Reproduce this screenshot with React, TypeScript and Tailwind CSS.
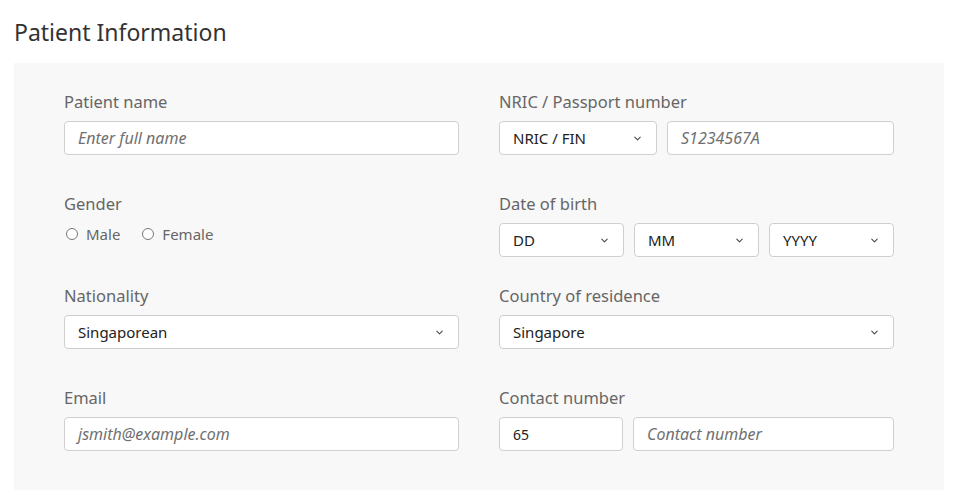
import { ChevronDown } from "lucide-react";

function Select({ value, className }: { value: string; className?: string }) {
  return (
    <div
      className={`flex h-[34px] items-center justify-between rounded-[4px] border border-[#cfcfcf] bg-white pl-[13px] pr-[13px] text-[15px] text-[#222] ${className ?? ""}`}
    >
      <span>{value}</span>
      <ChevronDown className="h-[11px] w-[11px] text-[#444]" strokeWidth={2.2} />
    </div>
  );
}

function TextInput({
  placeholder,
  value,
  className,
}: {
  placeholder?: string;
  value?: string;
  className?: string;
}) {
  return (
    <div
      className={`flex h-[34px] items-center rounded-[4px] border border-[#cfcfcf] bg-white px-[13px] text-[16px] ${className ?? ""}`}
    >
      {value ? (
        <span className="text-[14px] text-[#222]">{value}</span>
      ) : (
        <span className="italic text-[#707070]">{placeholder}</span>
      )}
    </div>
  );
}

function Label({ children }: { children: React.ReactNode }) {
  return <div className="mb-[8px] text-[16.5px] leading-[22px] text-[#666]">{children}</div>;
}

function Radio({ label }: { label: string }) {
  return (
    <label className="flex items-center gap-[8px] text-[15px] text-[#666]">
      <span className="h-[12px] w-[12px] rounded-full border border-[#777] bg-white" />
      {label}
    </label>
  );
}

export default function App() {
  return (
    <div className="min-h-screen bg-white pl-[14px] pr-[19px] pt-[16px] font-['Noto_Sans',sans-serif]">
      <h1 className="text-[23px] leading-[32px] text-[#333]">Patient Information</h1>

      <div className="mt-[15px] bg-[#f8f8f8] px-[50px] pt-[28px] pb-[39px]">
        <div className="grid grid-cols-2 gap-x-[40px]">
          {/* row 1 */}
          <div>
            <Label>Patient name</Label>
            <TextInput placeholder="Enter full name" />
          </div>
          <div>
            <Label>NRIC / Passport number</Label>
            <div className="flex gap-[10px]">
              <Select value="NRIC / FIN" className="w-[158px]" />
              <TextInput placeholder="S1234567A" className="flex-1" />
            </div>
          </div>

          {/* row 2 */}
          <div className="mt-[38px]">
            <Label>Gender</Label>
            <div className="flex gap-[22px] pl-[2px]">
              <Radio label="Male" />
              <Radio label="Female" />
            </div>
          </div>
          <div className="mt-[38px]">
            <Label>Date of birth</Label>
            <div className="flex gap-[10px]">
              <Select value="DD" className="flex-1" />
              <Select value="MM" className="flex-1" />
              <Select value="YYYY" className="flex-1" />
            </div>
          </div>

          {/* row 3 */}
          <div className="mt-[28px]">
            <Label>Nationality</Label>
            <Select value="Singaporean" />
          </div>
          <div className="mt-[28px]">
            <Label>Country of residence</Label>
            <Select value="Singapore" />
          </div>

          {/* row 4 */}
          <div className="mt-[38px]">
            <Label>Email</Label>
            <TextInput placeholder="jsmith@example.com" />
          </div>
          <div className="mt-[38px]">
            <Label>Contact number</Label>
            <div className="flex gap-[10px]">
              <TextInput value="65" className="w-[124px]" />
              <TextInput placeholder="Contact number" className="flex-1" />
            </div>
          </div>
        </div>
      </div>
    </div>
  );
}
